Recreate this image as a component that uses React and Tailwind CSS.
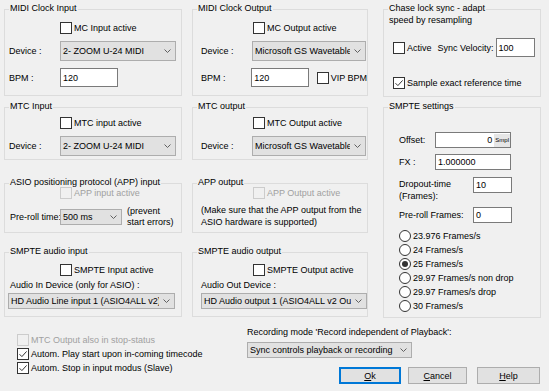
import React from "react";

function Group({ title, className = "", children }) {
  return (
    <div className={`relative border border-[#dcdcdc] ${className}`}>
      <span className="absolute left-[4px] -top-[8px] bg-[#f0f0f0] px-[1px] whitespace-nowrap">
        {title}
      </span>
      {children}
    </div>
  );
}

function Check({ label, checked, disabled, className = "" }) {
  return (
    <div className={`flex items-center h-[12px] ${className}`}>
      <span
        className={`relative w-[12px] h-[12px] shrink-0 border ${
          disabled ? "border-[#cccccc] bg-[#f0f0f0]" : "border-[#333333] bg-white"
        }`}
      >
        {checked && (
          <svg width="10" height="10" viewBox="0 0 10 10" className="absolute left-0 top-0">
            <path d="M1.5 5.2 L3.9 7.6 L8.6 2.4" stroke="#333333" strokeWidth="1" fill="none" />
          </svg>
        )}
      </span>
      {label && (
        <span className={`ml-[2px] whitespace-nowrap ${disabled ? "text-[#a0a0a0]" : ""}`}>
          {label}
        </span>
      )}
    </div>
  );
}

function Radio({ label, checked }) {
  return (
    <div className="flex items-center h-[14px]">
      <span className="w-[12px] h-[12px] shrink-0 rounded-full border border-[#333333] bg-white flex items-center justify-center">
        {checked && <span className="w-[6px] h-[6px] rounded-full bg-[#333333]" />}
      </span>
      <span className="ml-[2px] whitespace-nowrap">{label}</span>
    </div>
  );
}

function Select({ value, className = "" }) {
  return (
    <div className={`flex items-center border border-[#adadad] bg-[#e1e1e1] ${className}`}>
      <span className="flex-1 overflow-hidden whitespace-nowrap pl-[2px]">{value}</span>
      <svg width="7" height="4" viewBox="0 0 7 4" className="ml-[4px] mr-[4px] shrink-0">
        <path d="M0.5 0.5 L3.5 3.5 L6.5 0.5" stroke="#606060" fill="none" strokeWidth="1" />
      </svg>
    </div>
  );
}

function Input({ value, className = "" }) {
  return (
    <div className={`flex items-center border border-[#7a7a7a] bg-white pl-[2px] ${className}`}>
      {value}
    </div>
  );
}

function Button({ children, primary, className = "" }) {
  return (
    <div
      className={`flex items-center justify-center h-[17px] bg-[#e1e1e1] ${
        primary ? "border-2 border-[#0078d7]" : "border border-[#adadad]"
      } ${className}`}
    >
      {children}
    </div>
  );
}

export default function App() {
  return (
    <div className="w-[549px] h-[391px] overflow-hidden bg-[#f0f0f0] text-[9px] leading-[12px] text-black font-['Liberation_Sans',Arial,sans-serif]">
      <div className="flex pl-[4px] pt-[9px]">
        {/* left column */}
        <div className="w-[178px] flex flex-col">
          <Group title="MIDI Clock Input" className="h-[87px]">
            <Check label="MC Input active" className="mt-[12px] ml-[55px]" />
            <div className="flex items-center mt-[7px] pl-[4px]">
              <span className="w-[51px]">Device :</span>
              <Select value="2- ZOOM U-24 MIDI" className="w-[116px] h-[20px]" />
            </div>
            <div className="flex items-center mt-[7px] pl-[4px]">
              <span className="w-[51px]">BPM :</span>
              <Input value="120" className="w-[58px] h-[19px]" />
            </div>
          </Group>

          <Group title="MTC Input" className="mt-[11px] h-[53px]">
            <Check label="MTC input active" className="mt-[9px] ml-[55px]" />
            <div className="flex items-center mt-[7px] pl-[4px]">
              <span className="w-[51px]">Device :</span>
              <Select value="2- ZOOM U-24 MIDI" className="w-[116px] h-[20px]" />
            </div>
          </Group>

          <Group title="ASIO positioning protocol (APP) input" className="mt-[23px] h-[50px]">
            <Check label="APP input active" disabled className="mt-[3px] ml-[55px]" />
            <div className="flex items-center mt-[7px] pl-[5px]">
              <span className="w-[50px] whitespace-nowrap">Pre-roll time:</span>
              <Select value="500 ms" className="w-[62px] h-[16px]" />
              <span className="ml-[5px] leading-[11px]">
                (prevent
                <br />
                start errors)
              </span>
            </div>
          </Group>

          <Group title="SMPTE audio input" className="mt-[19px] h-[65px]">
            <Check label="SMPTE Input active" className="mt-[11px] ml-[55px]" />
            <div className="mt-[3px] pl-[5px]">Audio In Device (only for ASIO) :</div>
            <Select
              value="HD Audio Line input 1 (ASIO4ALL v2)"
              className="mt-[2px] ml-[3px] w-[167px] h-[16px]"
            />
          </Group>
        </div>

        {/* middle column */}
        <div className="w-[176px] ml-[10px] flex flex-col">
          <Group title="MIDI Clock Output" className="h-[87px]">
            <Check label="MC Output active" className="mt-[12px] ml-[60px]" />
            <div className="flex items-center mt-[7px] pl-[8px]">
              <span className="w-[51px]">Device :</span>
              <Select value="Microsoft GS Wavetable Synth" className="w-[114px] h-[20px]" />
            </div>
            <div className="flex items-center mt-[7px] pl-[8px]">
              <span className="w-[51px]">BPM :</span>
              <Input value="120" className="w-[58px] h-[19px]" />
              <Check label="VIP BPM" className="ml-[8px]" />
            </div>
          </Group>

          <Group title="MTC output" className="mt-[11px] h-[53px]">
            <Check label="MTC Output active" className="mt-[9px] ml-[60px]" />
            <div className="flex items-center mt-[7px] pl-[8px]">
              <span className="w-[51px]">Device :</span>
              <Select value="Microsoft GS Wavetable Synth" className="w-[114px] h-[20px]" />
            </div>
          </Group>

          <Group title="APP output" className="mt-[23px] h-[50px]">
            <Check label="APP Output active" disabled className="mt-[3px] ml-[60px]" />
            <div className="mt-[5px] pl-[8px]">
              (Make sure that the APP output from the
              <br />
              ASIO hardware is supported)
            </div>
          </Group>

          <Group title="SMPTE audio output" className="mt-[19px] h-[65px]">
            <Check label="SMPTE Output active" className="mt-[11px] ml-[60px]" />
            <div className="mt-[3px] pl-[8px]">Audio Out Device :</div>
            <Select
              value="HD Audio output 1 (ASIO4ALL v2 Out)"
              className="mt-[2px] ml-[8px] w-[166px] h-[16px]"
            />
          </Group>
        </div>

        {/* right column */}
        <div className="w-[158px] ml-[15px] flex flex-col">
          <Group
            title={
              <>
                Chase lock sync - adapt
                <br />
                speed by resampling
              </>
            }
            className="h-[88px]"
          >
            <div className="flex items-center mt-[28px] h-[19px]">
              <Check label="Active" className="ml-[9px]" />
              <span className="ml-[6px] whitespace-nowrap">Sync Velocity:</span>
              <Input value="100" className="ml-[2px] w-[39px] h-[19px]" />
            </div>
            <Check checked label="Sample exact reference time" className="mt-[20px] ml-[9px]" />
          </Group>

          <Group title="SMPTE settings" className="mt-[10px] h-[211px]">
            <div className="flex items-center mt-[24px] pl-[15px]">
              <span className="w-[36px]">Offset:</span>
              <div className="flex items-center justify-end w-[76px] h-[16px] border border-[#7a7a7a] bg-white">
                <span>0</span>
                <span className="ml-[2px] h-[13px] px-[1px] flex items-center bg-[#e6e6e6] text-[6px] leading-[8px]">
                  Smpl
                </span>
              </div>
            </div>
            <div className="flex items-center mt-[6px] pl-[15px]">
              <span className="w-[36px]">FX :</span>
              <Input value="1.000000" className="w-[76px] h-[16px]" />
            </div>
            <div className="flex items-start mt-[7px] pl-[15px]">
              <span className="w-[74px] pt-[1px]">
                Dropout-time
                <br />
                (Frames):
              </span>
              <Input value="10" className="w-[39px] h-[16px]" />
            </div>
            <div className="flex items-center mt-[5px] pl-[15px]">
              <span className="w-[74px] whitespace-nowrap">Pre-roll Frames:</span>
              <Input value="0" className="w-[39px] h-[16px]" />
            </div>
            <div className="flex flex-col mt-[6px] pl-[15px]">
              <Radio label="23.976 Frames/s" />
              <Radio label="24 Frames/s" />
              <Radio label="25 Frames/s" checked />
              <Radio label="29.97 Frames/s non drop" />
              <Radio label="29.97 Frames/s drop" />
              <Radio label="30 Frames/s" />
            </div>
          </Group>
        </div>
      </div>

      {/* bottom area */}
      <div className="flex">
        <div className="w-[247px] pl-[17px] pt-[16px] flex flex-col gap-[2px]">
          <Check disabled label="MTC Output also in stop-status" />
          <Check checked label="Autom. Play start upon in-coming timecode" />
          <Check checked label="Autom. Stop in input modus (Slave)" />
        </div>
        <div className="flex flex-col pt-[8px]">
          <span className="whitespace-nowrap">Recording mode 'Record independent of Playback':</span>
          <Select value="Sync controls playback or recording" className="mt-[4px] w-[165px] h-[16px]" />
          <div className="flex mt-[9px] ml-[92px]">
            <Button primary className="w-[62px]">
              <span className="underline">O</span>k
            </Button>
            <Button className="w-[59px] ml-[7px]">
              <span className="underline">C</span>ancel
            </Button>
            <Button className="w-[63px] ml-[10px]">
              <span className="underline">H</span>elp
            </Button>
          </div>
        </div>
      </div>
    </div>
  );
}
